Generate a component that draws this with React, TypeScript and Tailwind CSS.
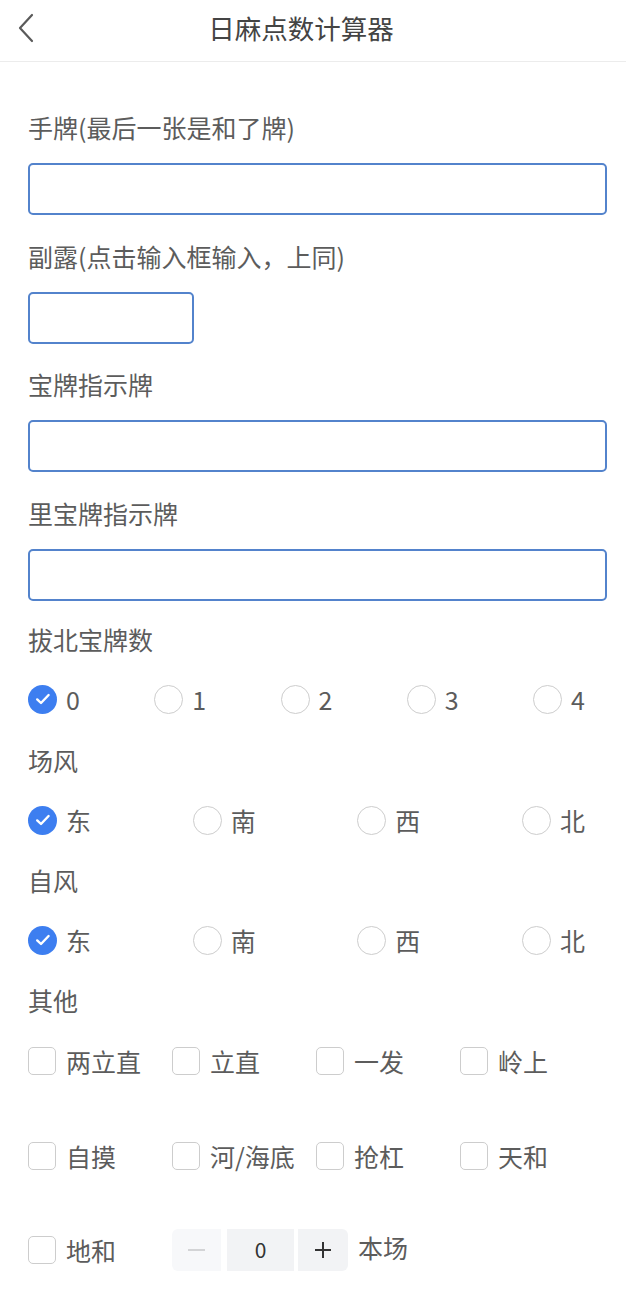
import { useState } from 'react';

const font = { fontFamily: '"Noto Sans CJK SC", "Noto Sans", sans-serif' };

const nukiOptions = ['0', '1', '2', '3', '4'];
const winds = ['东', '南', '西', '北'];
const extras = [
  ['两立直', '立直', '一发', '岭上'],
  ['自摸', '河/海底', '抢杠', '天和'],
];

function Label({ children }: { children: React.ReactNode }) {
  return <div className="h-10 leading-10 text-[25px] text-[#5c5c5c]">{children}</div>;
}

function Check() {
  return (
    <svg width="18" height="18" viewBox="0 0 18 18" fill="none">
      <path d="M3.2 9.4 7 13 14.6 5" stroke="white" strokeWidth="2.4" strokeLinecap="round" strokeLinejoin="round" />
    </svg>
  );
}

function Radio({ checked, label, onClick }: { checked: boolean; label: string; onClick: () => void }) {
  return (
    <button className="flex items-center gap-[9px] h-11" onClick={onClick}>
      {checked ? (
        <span className="w-[29px] h-[29px] rounded-full bg-[#3d7ef0] flex items-center justify-center">
          <Check />
        </span>
      ) : (
        <span className="w-[29px] h-[29px] rounded-full border-[1.5px] border-[#cdcdcd] bg-white" />
      )}
      <span className="text-[25px] text-[#5c5c5c] leading-none">{label}</span>
    </button>
  );
}

function Checkbox({ label }: { label: string }) {
  const [on, setOn] = useState(false);
  return (
    <button className="flex items-center gap-[10px] h-11" onClick={() => setOn(!on)}>
      <span
        className={`w-[28px] h-[28px] rounded-[5px] border-[1.5px] flex items-center justify-center ${
          on ? 'bg-[#3d7ef0] border-[#3d7ef0]' : 'bg-white border-[#cdcdcd]'
        }`}
      >
        {on && <Check />}
      </span>
      <span className="text-[25px] text-[#5c5c5c] leading-none whitespace-nowrap">{label}</span>
    </button>
  );
}

export default function App() {
  const [nuki, setNuki] = useState('0');
  const [round, setRound] = useState('东');
  const [seat, setSeat] = useState('东');
  const [honba, setHonba] = useState(0);

  return (
    <div className="w-[626px] min-h-[1314px] bg-white" style={font}>
      {/* Top bar */}
      <header className="relative h-[62px] border-b border-[#ececec] flex items-center justify-center pr-6">
        <button className="absolute left-[14px] top-[9px] p-1">
          <svg width="16" height="30" viewBox="0 0 16 30" fill="none">
            <path d="M14 2 2 15l12 13" stroke="#5a5a5a" strokeWidth="2.2" strokeLinecap="round" strokeLinejoin="round" />
          </svg>
        </button>
        <h1 className="text-[26.5px] text-[#444] -mt-[6px]">日麻点数计算器</h1>
      </header>

      <main className="pl-7 pr-[19px] pt-[45px]">
        {/* Text inputs */}
        <Label>手牌(最后一张是和了牌)</Label>
        <input className="mt-4 w-full h-[52px] rounded-[5px] border-2 border-[#5383cc] outline-none px-3" />

        <div className="mt-[20.5px]">
          <Label>副露(点击输入框输入，上同)</Label>
        </div>
        <input className="mt-4 w-[166px] h-[52px] rounded-[5px] border-2 border-[#5383cc] outline-none px-3 block" />

        <div className="mt-[20.5px]">
          <Label>宝牌指示牌</Label>
        </div>
        <input className="mt-4 w-full h-[52px] rounded-[5px] border-2 border-[#5383cc] outline-none px-3" />

        <div className="mt-[20.5px]">
          <Label>里宝牌指示牌</Label>
        </div>
        <input className="mt-4 w-full h-[52px] rounded-[5px] border-2 border-[#5383cc] outline-none px-3" />

        {/* Radio groups */}
        <div className="mt-[18.5px]">
          <Label>拔北宝牌数</Label>
        </div>
        <div className="mt-[18px] pr-[22px] flex justify-between">
          {nukiOptions.map(n => (
            <Radio key={n} label={n} checked={nuki === n} onClick={() => setNuki(n)} />
          ))}
        </div>

        <div className="mt-[19px]">
          <Label>场风</Label>
        </div>
        <div className="mt-[18px] pr-[22px] flex justify-between">
          {winds.map(w => (
            <Radio key={w} label={w} checked={round === w} onClick={() => setRound(w)} />
          ))}
        </div>

        <div className="mt-[18px]">
          <Label>自风</Label>
        </div>
        <div className="mt-[18px] pr-[22px] flex justify-between">
          {winds.map(w => (
            <Radio key={w} label={w} checked={seat === w} onClick={() => setSeat(w)} />
          ))}
        </div>

        {/* Other */}
        <div className="mt-[18px]">
          <Label>其他</Label>
        </div>
        <div className="mt-[19px] flex flex-col gap-[51px]">
          {extras.map((row, i) => (
            <div key={i} className="grid grid-cols-[repeat(4,144px)]">
              {row.map(l => (
                <Checkbox key={l} label={l} />
              ))}
            </div>
          ))}
          <div className="grid grid-cols-[144px_1fr] -mt-[1px]">
            <Checkbox label="地和" />
            <div className="flex items-center h-11">
              <button
                className="w-[49px] h-[42px] rounded-l-[6px] bg-[#f7f8fa] flex items-center justify-center"
                onClick={() => setHonba(Math.max(0, honba - 1))}
              >
                <span className="block w-[17px] h-[2px] bg-[#d3d4d6]" />
              </button>
              <div className="ml-[6px] w-[67px] h-[42px] bg-[#f2f3f5] flex items-center justify-center text-[21px] text-[#333]">
                {honba}
              </div>
              <button
                className="ml-[4px] w-[50px] h-[42px] rounded-r-[6px] bg-[#f2f3f5] flex items-center justify-center"
                onClick={() => setHonba(honba + 1)}
              >
                <svg width="18" height="18" viewBox="0 0 18 18">
                  <path d="M9 1v16M1 9h16" stroke="#333" strokeWidth="2" />
                </svg>
              </button>
              <span className="ml-[10px] text-[25px] text-[#5c5c5c] -mt-[4px]">本场</span>
            </div>
          </div>
        </div>
      </main>
    </div>
  );
}
